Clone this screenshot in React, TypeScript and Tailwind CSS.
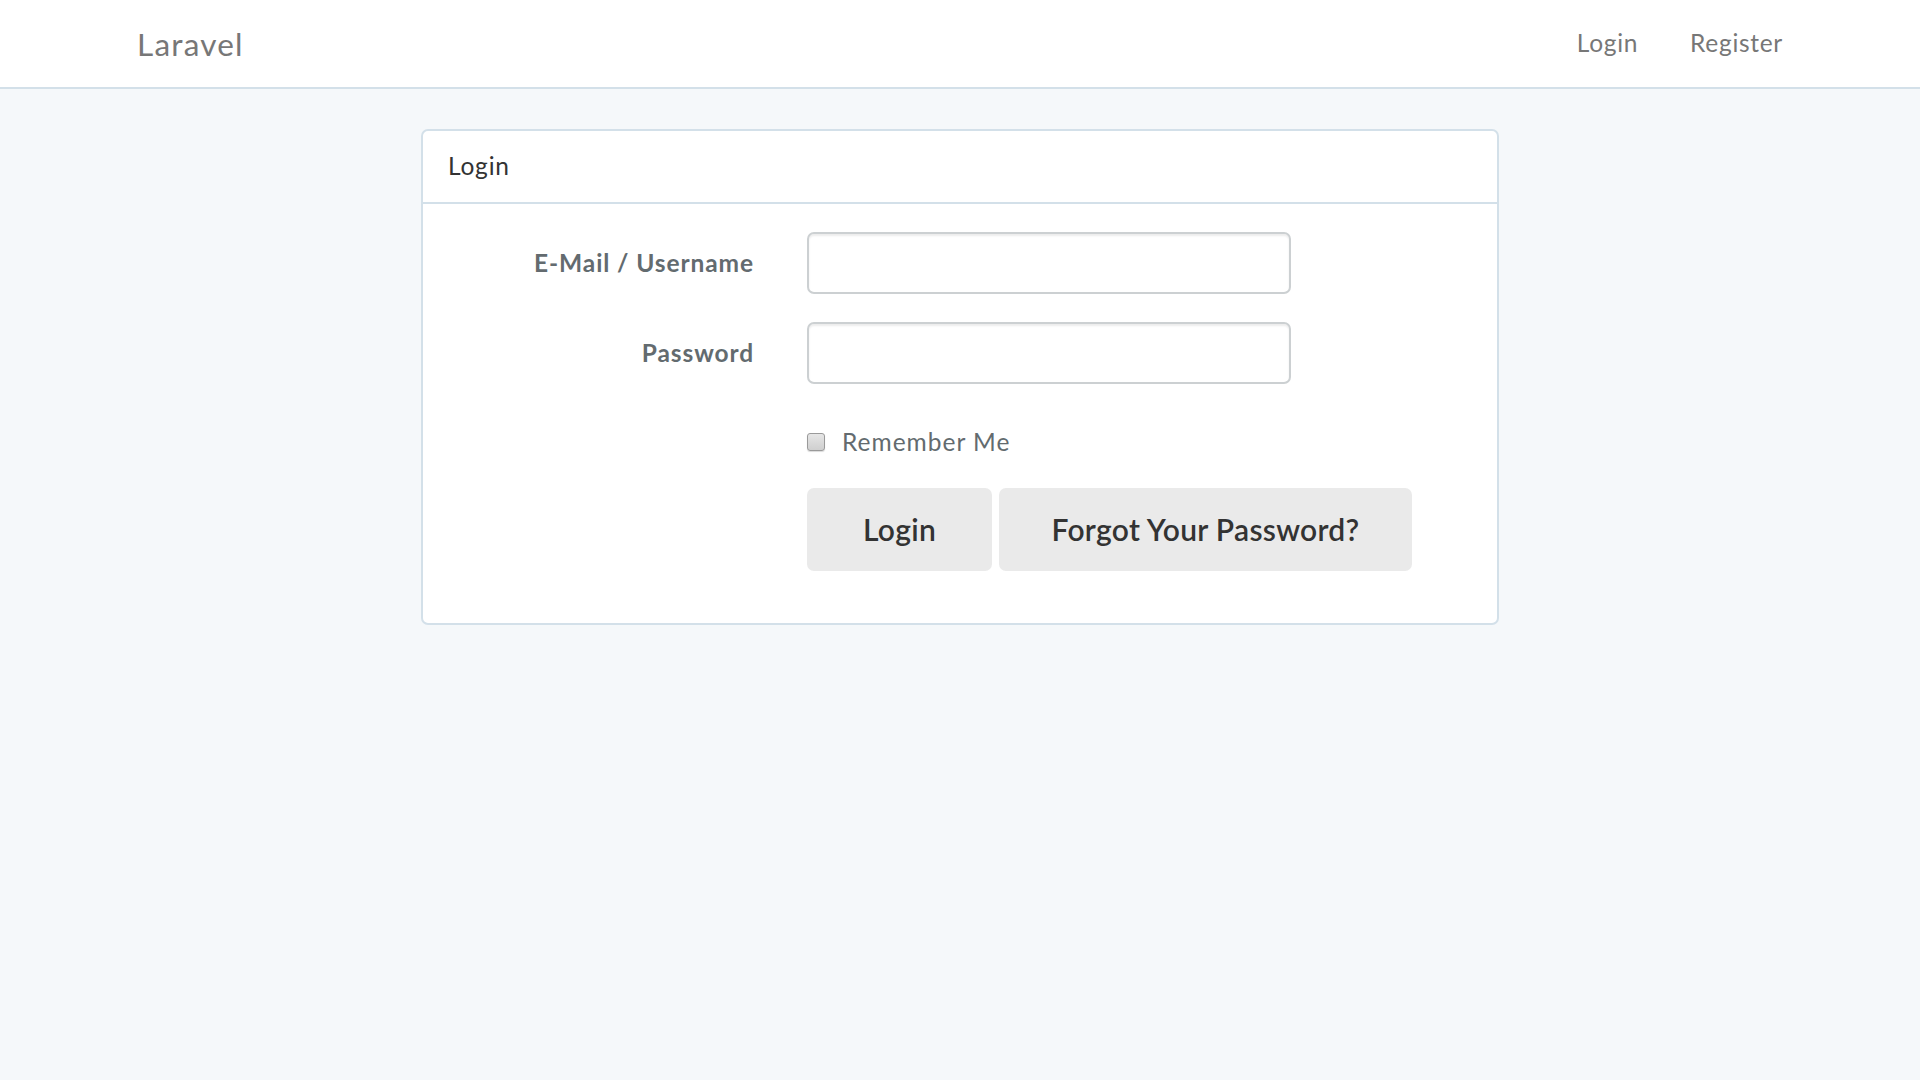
const font = { fontFamily: '"Lato", "Open Sans", sans-serif' }

function Field({ label, type }: { label: string; type: string }) {
  return (
    <div className="flex items-center">
      <label className="w-[305px] text-right text-[24.5px] font-bold tracking-[0.9px] text-[#636b6f]">
        {label}
      </label>
      <input
        type={type}
        className="ml-[53px] h-[62px] w-[484px] rounded-[7px] border-2 border-[#ccd0d2] bg-white px-[21px] text-[24.5px] text-[#555] shadow-[inset_0_2px_2px_rgba(0,0,0,0.075)] outline-none"
      />
    </div>
  )
}

export default function App() {
  return (
    <div className="min-h-screen bg-[#f5f8fa]" style={font}>
      <nav className="h-[89px] border-b-2 border-[#d3e0e9] bg-white">
        <div className="mx-auto flex h-full w-[1698px] items-center justify-between">
          <a href="#" className="pl-[26px] pt-[2px] text-[31.5px] tracking-[1.2px] text-[#777]">
            Laravel
          </a>
          <ul className="flex items-center text-[24.5px] tracking-[0.7px] text-[#777]">
            <li>
              <a href="#" className="px-[26px]">Login</a>
            </li>
            <li>
              <a href="#" className="px-[26px]">Register</a>
            </li>
          </ul>
        </div>
      </nav>

      <div className="mx-auto mt-[40px] w-[1078px] rounded-[7px] border-2 border-[#d3e0e9] bg-white">
        <div className="flex h-[73px] items-center border-b-2 border-[#d3e0e9] px-[25px] text-[24.5px] tracking-[0.8px] text-[#333]">
          Login
        </div>
        <form className="flex flex-col px-[26px] pb-[52px] pt-[28px]">
          <Field label="E-Mail / Username" type="text" />
          <div className="mt-[28px]">
            <Field label="Password" type="password" />
          </div>

          {/* checkbox drawn by hand, native one renders white */}
          <div className="ml-[358px] mt-[40px] flex items-center">
            <span className="h-[18px] w-[18px] rounded-[3px] border border-[#9a9a9a] bg-gradient-to-b from-[#e6e6e6] to-[#cfcfcf] shadow-[0_1px_1px_rgba(0,0,0,0.15)]" />
            <span className="ml-[17px] text-[24.5px] tracking-[1px] text-[#636b6f]">Remember Me</span>
          </div>

          <div className="ml-[358px] mt-[27px] flex gap-[7px]">
            <button
              type="button"
              className="h-[83px] w-[185px] rounded-[7px] bg-[#eaeaea] text-[30px] font-semibold tracking-[0.3px] text-[#333]"
            >
              Login
            </button>
            <button
              type="button"
              className="h-[83px] w-[413px] rounded-[7px] bg-[#eaeaea] text-[30px] font-semibold tracking-[0.3px] text-[#333]"
            >
              Forgot Your Password?
            </button>
          </div>
        </form>
      </div>
    </div>
  )
}
